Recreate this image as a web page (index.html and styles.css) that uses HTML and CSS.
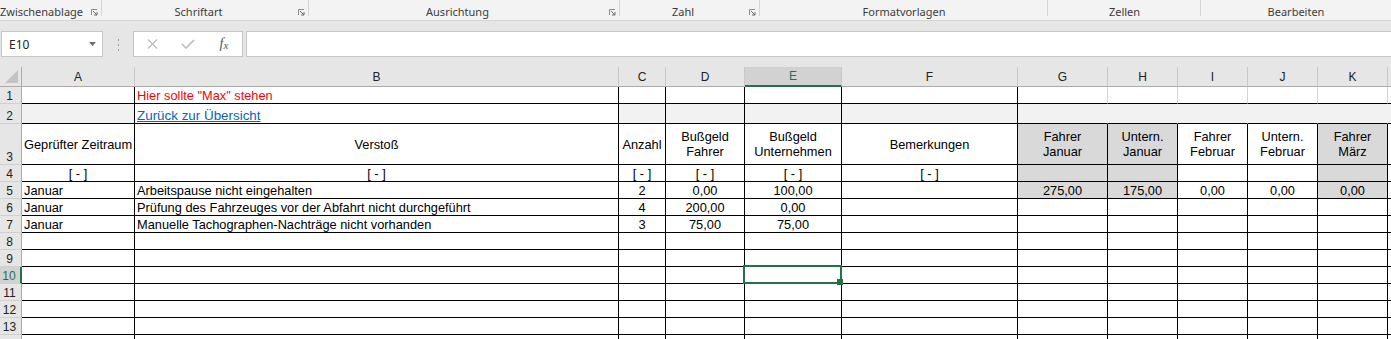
FILE: index.html
```html
<!DOCTYPE html>
<html lang="de">
<head>
  <meta charset="UTF-8">
  <title>Verstöße – Excel</title>
  <link rel="stylesheet" href="styles.css">
</head>
<body>
  <div class="ribbon">
    <div class="group g-clip">Zwischenablage
      <svg class="launch" viewBox="0 0 7 7"><path d="M0.5 6V0.5H6" fill="none" stroke="#8a8a8a"/><path d="M2 2L6 6M6 3V6H3" fill="none" stroke="#6a6a6a"/></svg>
    </div>
    <div class="group g-font">Schriftart
      <svg class="launch" viewBox="0 0 7 7"><path d="M0.5 6V0.5H6" fill="none" stroke="#8a8a8a"/><path d="M2 2L6 6M6 3V6H3" fill="none" stroke="#6a6a6a"/></svg>
    </div>
    <div class="group g-align">Ausrichtung
      <svg class="launch" viewBox="0 0 7 7"><path d="M0.5 6V0.5H6" fill="none" stroke="#8a8a8a"/><path d="M2 2L6 6M6 3V6H3" fill="none" stroke="#6a6a6a"/></svg>
    </div>
    <div class="group g-num">Zahl
      <svg class="launch" viewBox="0 0 7 7"><path d="M0.5 6V0.5H6" fill="none" stroke="#8a8a8a"/><path d="M2 2L6 6M6 3V6H3" fill="none" stroke="#6a6a6a"/></svg>
    </div>
    <div class="group plain g-styles">Formatvorlagen</div>
    <div class="group plain g-cells">Zellen</div>
    <div class="group plain g-edit">Bearbeiten</div>
  </div>

  <div class="formula-bar">
    <div class="namebox">
      <span>E10</span>
      <svg width="7" height="4" viewBox="0 0 7 4"><path d="M0 0H7L3.5 4Z" fill="#6d6d6d"/></svg>
    </div>
    <div class="grip"><i></i><i></i><i></i></div>
    <div class="fx-buttons">
      <span><svg width="11" height="10" viewBox="0 0 11 10"><path d="M1 0.5L10 9.5M10 0.5L1 9.5" stroke="#bcbcbc" stroke-width="1.3"/></svg></span>
      <span><svg width="14" height="10" viewBox="0 0 14 10"><path d="M1 5L5 9L13 1" fill="none" stroke="#bcbcbc" stroke-width="1.6"/></svg></span>
      <span class="fx">f<small>x</small></span>
    </div>
    <div class="fx-input"></div>
  </div>

  <table class="sheet">
    <colgroup>
      <col class="w-hdr"><col class="w-a"><col class="w-b"><col class="w-c"><col class="w-d"><col class="w-e">
      <col class="w-f"><col class="w-g"><col class="w-x"><col class="w-x"><col class="w-x"><col class="w-x"><col class="w-l">
    </colgroup>
    <tr class="r-head">
      <th class="corner"><svg width="21" height="19" viewBox="0 0 21 19"><path d="M18 3V16H5Z" fill="#c2c2c2"/></svg></th>
      <th class="col">A</th><th class="col">B</th><th class="col">C</th><th class="col">D</th>
      <th class="col sel">E</th><th class="col">F</th><th class="col">G</th><th class="col">H</th>
      <th class="col">I</th><th class="col">J</th><th class="col">K</th><th class="col"></th>
    </tr>
    <tr class="r17">
      <th class="rh">1</th>
      <td class="k"></td><td class="k red">Hier sollte "Max" stehen</td>
      <td class="k"></td><td class="k"></td><td class="k"></td><td class="k"></td>
      <td class="kb"></td><td class="kb"></td><td class="kb"></td><td class="kb"></td><td class="kb"></td><td class="kb"></td>
    </tr>
    <tr class="r20">
      <th class="rh">2</th>
      <td class="k f1"></td><td class="k"><a href="#">Zurück zur Übersicht</a></td>
      <td class="k f1"></td><td class="k f1"></td><td class="k f1"></td><td class="k f1"></td>
      <td class="f1n"></td><td class="f1n"></td><td class="f1n"></td><td class="f1n"></td><td class="f1n"></td><td class="f1n"></td>
    </tr>
    <tr class="r3">
      <th class="rh">3</th>
      <td class="k c">Geprüfter Zeitraum</td><td class="k c">Verstoß</td><td class="k c">Anzahl</td>
      <td class="k c">Bußgeld<br>Fahrer</td><td class="k c">Bußgeld<br>Unternehmen</td><td class="k c">Bemerkungen</td>
      <td class="k c f2">Fahrer<br>Januar</td><td class="k c f2">Untern.<br>Januar</td>
      <td class="k c">Fahrer<br>Februar</td><td class="k c">Untern.<br>Februar</td>
      <td class="k c f2">Fahrer<br>März</td><td class="kb"></td>
    </tr>
    <tr class="r17">
      <th class="rh">4</th>
      <td class="k c">[ - ]</td><td class="k c">[ - ]</td><td class="k c">[ - ]</td>
      <td class="k c">[ - ]</td><td class="k c">[ - ]</td><td class="k c">[ - ]</td>
      <td class="k f2"></td><td class="k f2"></td><td class="k"></td><td class="k"></td><td class="k f2"></td><td class="kb"></td>
    </tr>
    <tr class="r17">
      <th class="rh">5</th>
      <td class="k">Januar</td><td class="k">Arbeitspause nicht eingehalten</td><td class="k c">2</td>
      <td class="k c">0,00</td><td class="k c">100,00</td><td class="k"></td>
      <td class="k c f2">275,00</td><td class="k c f2">175,00</td><td class="k c">0,00</td><td class="k c">0,00</td>
      <td class="k c f2">0,00</td><td class="kb"></td>
    </tr>
    <tr class="r17">
      <th class="rh">6</th>
      <td class="k">Januar</td><td class="k">Prüfung des Fahrzeuges vor der Abfahrt nicht durchgeführt</td><td class="k c">4</td>
      <td class="k c">200,00</td><td class="k c">0,00</td><td class="k"></td>
      <td class="k"></td><td class="k"></td><td class="k"></td><td class="k"></td><td class="k"></td><td class="kb"></td>
    </tr>
    <tr class="r17">
      <th class="rh">7</th>
      <td class="k">Januar</td><td class="k">Manuelle Tachographen-Nachträge nicht vorhanden</td><td class="k c">3</td>
      <td class="k c">75,00</td><td class="k c">75,00</td><td class="k"></td>
      <td class="k"></td><td class="k"></td><td class="k"></td><td class="k"></td><td class="k"></td><td class="kb"></td>
    </tr>
    <tr class="r17">
      <th class="rh">8</th>
      <td class="k"></td><td class="k"></td><td class="k"></td><td class="k"></td><td class="k"></td><td class="k"></td>
      <td class="k"></td><td class="k"></td><td class="k"></td><td class="k"></td><td class="k"></td><td class="kb"></td>
    </tr>
    <tr class="r17">
      <th class="rh">9</th>
      <td class="k"></td><td class="k"></td><td class="k"></td><td class="k"></td><td class="k"></td><td class="k"></td>
      <td class="k"></td><td class="k"></td><td class="k"></td><td class="k"></td><td class="k"></td><td class="kb"></td>
    </tr>
    <tr class="r17">
      <th class="rh sel">10</th>
      <td class="k"></td><td class="k"></td><td class="k"></td><td class="k"></td><td class="k active"></td><td class="k"></td>
      <td class="k"></td><td class="k"></td><td class="k"></td><td class="k"></td><td class="k"></td><td class="kb"></td>
    </tr>
    <tr class="r17">
      <th class="rh">11</th>
      <td class="k"></td><td class="k"></td><td class="k"></td><td class="k"></td><td class="k"></td><td class="k"></td>
      <td class="k"></td><td class="k"></td><td class="k"></td><td class="k"></td><td class="k"></td><td class="kb"></td>
    </tr>
    <tr class="r17">
      <th class="rh">12</th>
      <td class="k"></td><td class="k"></td><td class="k"></td><td class="k"></td><td class="k"></td><td class="k"></td>
      <td class="k"></td><td class="k"></td><td class="k"></td><td class="k"></td><td class="k"></td><td class="kb"></td>
    </tr>
    <tr class="r17">
      <th class="rh">13</th>
      <td class="k"></td><td class="k"></td><td class="k"></td><td class="k"></td><td class="k"></td><td class="k"></td>
      <td class="k"></td><td class="k"></td><td class="k"></td><td class="k"></td><td class="k"></td><td class="kb"></td>
    </tr>
    <tr class="r17">
      <th class="rh"></th>
      <td class="k"></td><td class="k"></td><td class="k"></td><td class="k"></td><td class="k"></td><td class="k"></td>
      <td class="k"></td><td class="k"></td><td class="k"></td><td class="k"></td><td class="k"></td><td class="kb"></td>
    </tr>
  </table>
</body>
</html>
```

FILE: styles.css
```css
body {
  margin: 0;
  width: 1391px;
  height: 339px;
  overflow: hidden;
  background: #fff;
  font-family: "Liberation Sans", Arial, sans-serif;
}

/* ribbon group captions */
.ribbon {
  display: flex;
  height: 20px;
  background: #f3f3f3;
  border-bottom: 1px solid #d5d5d5;
  font-family: "Noto Sans", sans-serif;
  font-size: 11px;
  color: #3c3c3c;
}

.group {
  position: relative;
  display: flex;
  justify-content: center;
  box-sizing: border-box;
  padding: 4px 14px 0 0;
  line-height: 15px;
  white-space: nowrap;
}

.group::after {
  content: "";
  position: absolute;
  right: 0;
  top: 0;
  width: 1px;
  height: 16px;
  background: #d5d5d5;
}

.group.plain {
  padding-right: 0;
}

.g-clip {
  width: 102px;
  justify-content: flex-start;
  padding-right: 0;
}

.g-font { width: 207px; }
.g-align { width: 311px; }
.g-num { width: 140px; }
.g-styles { width: 288px; }
.g-cells { width: 153px; }

.g-edit {
  flex: 1;
}

.g-edit::after {
  display: none;
}

.launch {
  position: absolute;
  right: 4px;
  top: 9px;
  width: 7px;
  height: 7px;
}

/* formula bar */
.formula-bar {
  display: flex;
  height: 46px;
  box-sizing: border-box;
  padding-top: 10px;
  background: #e6e6e6;
}

.namebox {
  margin-left: 1px;
  width: 102px;
  height: 26px;
  box-sizing: border-box;
  border: 1px solid #c6c6c6;
  background: #fff;
  display: flex;
  align-items: center;
  justify-content: space-between;
  padding: 0 6px 0 7px;
  font-family: "Noto Sans", sans-serif;
  font-size: 12px;
  color: #222;
}

.grip {
  width: 30px;
  display: flex;
  flex-direction: column;
  align-items: center;
  gap: 3px;
  padding-top: 8px;
}

.grip i {
  width: 1px;
  height: 2px;
  background: #9a9a9a;
}

.fx-buttons {
  width: 110px;
  height: 26px;
  box-sizing: border-box;
  border: 1px solid #c6c6c6;
  background: #fff;
  display: flex;
}

.fx-buttons span {
  width: 36px;
  display: flex;
  align-items: center;
  justify-content: center;
}

.fx {
  font-family: "Liberation Serif", serif;
  font-style: italic;
  font-size: 14px;
  color: #555;
}

.fx small {
  font-size: 11px;
  position: relative;
  top: 1px;
}

.fx-input {
  flex: 1;
  margin-left: 3px;
  margin-right: -4px;
  height: 26px;
  box-sizing: border-box;
  border: 1px solid #c6c6c6;
  background: #fff;
}

/* worksheet grid */
.sheet {
  table-layout: fixed;
  border-collapse: separate;
  border-spacing: 0;
  width: 1418px;
  font-size: 12.8px;
}

.w-hdr { width: 22px; }
.w-a { width: 113px; }
.w-b { width: 484px; }
.w-c { width: 47px; }
.w-d { width: 79px; }
.w-e { width: 97px; }
.w-f { width: 176px; }
.w-g { width: 90px; }
.w-x { width: 70px; }
.w-l { width: 30px; }

.r-head { height: 20px; }
.r17 { height: 17px; }
.r20 { height: 20px; }
.r3 { height: 41px; }

.sheet td {
  padding: 0 2px;
  border-right: 1px solid #d4d4d4;
  border-bottom: 1px solid #d4d4d4;
  white-space: nowrap;
  overflow: hidden;
  vertical-align: bottom;
  line-height: 14px;
  color: #000;
}

.r3 td {
  vertical-align: middle;
  line-height: 15px;
}

.sheet th {
  padding: 0;
  font-weight: normal;
  font-size: 12px;
  color: #222;
  background: #e6e6e6;
}

.corner {
  border-right: 1px solid #ababab;
  border-bottom: 1px solid #ababab;
  vertical-align: top;
}

.corner svg {
  display: block;
}

.col {
  border-right: 1px solid #c8c8c8;
  border-bottom: 1px solid #ababab;
  vertical-align: middle;
  text-align: center;
}

.col.sel {
  background: #d2d2d2;
  color: #217346;
  border-bottom: 2px solid #217346;
}

.rh {
  border-right: 1px solid #ababab;
  border-bottom: 1px solid #d0d0d0;
  vertical-align: bottom;
  text-align: center;
  padding-right: 2px !important;
  line-height: 14px;
}

.rh.sel {
  background: #d2d2d2;
  color: #217346;
  border-right: 2px solid #217346;
}

.sheet td.k {
  border-right-color: #000;
  border-bottom-color: #000;
}

.sheet td.kb {
  border-bottom-color: #000;
}

.sheet td.f1n {
  background: #f2f2f2;
  border-right-color: #f2f2f2;
  border-bottom-color: #000;
}

.f1 { background: #f2f2f2; }
.f2 { background: #d9d9d9; }

.c { text-align: center; }

.red { color: #ff0000 !important; }

.sheet a {
  color: #0563c1;
  text-decoration: underline;
  font-size: 13.4px;
}

.sheet td.active {
  position: relative;
  overflow: visible;
}

.active::before {
  content: "";
  position: absolute;
  left: -2px;
  top: -2px;
  right: -1px;
  bottom: -1px;
  border: 2px solid #217346;
}

.active::after {
  content: "";
  position: absolute;
  right: -2px;
  bottom: -2px;
  width: 6px;
  height: 6px;
  background: #217346;
}
```
